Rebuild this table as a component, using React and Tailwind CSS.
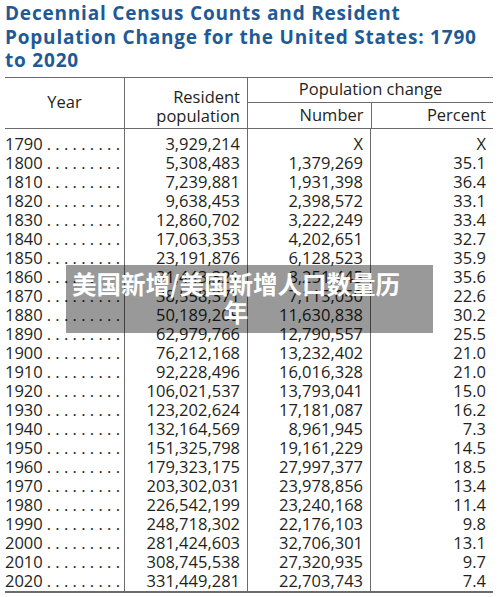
const rows = [
  ["1790", "3,929,214", "X", "X"],
  ["1800", "5,308,483", "1,379,269", "35.1"],
  ["1810", "7,239,881", "1,931,398", "36.4"],
  ["1820", "9,638,453", "2,398,572", "33.1"],
  ["1830", "12,860,702", "3,222,249", "33.4"],
  ["1840", "17,063,353", "4,202,651", "32.7"],
  ["1850", "23,191,876", "6,128,523", "35.9"],
  ["1860", "31,443,321", "8,251,445", "35.6"],
  ["1870", "38,558,371", "7,115,050", "22.6"],
  ["1880", "50,189,209", "11,630,838", "30.2"],
  ["1890", "62,979,766", "12,790,557", "25.5"],
  ["1900", "76,212,168", "13,232,402", "21.0"],
  ["1910", "92,228,496", "16,016,328", "21.0"],
  ["1920", "106,021,537", "13,793,041", "15.0"],
  ["1930", "123,202,624", "17,181,087", "16.2"],
  ["1940", "132,164,569", "8,961,945", "7.3"],
  ["1950", "151,325,798", "19,161,229", "14.5"],
  ["1960", "179,323,175", "27,997,377", "18.5"],
  ["1970", "203,302,031", "23,978,856", "13.4"],
  ["1980", "226,542,199", "23,240,168", "11.4"],
  ["1990", "248,718,302", "22,176,103", "9.8"],
  ["2000", "281,424,603", "32,706,301", "13.1"],
  ["2010", "308,745,538", "27,320,935", "9.7"],
  ["2020", "331,449,281", "22,703,743", "7.4"],
]

export default function App() {
  return (
    <div className="relative w-[500px] h-[597px] bg-white overflow-hidden font-['Open_Sans',sans-serif] text-[#231f20]">
      <h1 className="pl-[5px] pt-[2px] text-[19px] leading-[23.5px] font-bold text-[#1f5a96] tracking-[0.8px]">
        Decennial Census Counts and Resident
        <br />
        Population Change for the United States: 1790
        <br />
        to 2020
      </h1>

      <div className="ml-[5px] mt-[4px] w-[488px] border-t border-[#6b6b6b] text-[16.5px]">
        {/* header */}
        <div className="flex h-[51px] border-b border-[#6b6b6b]">
          <div className="w-[119px] flex items-center justify-center">Year</div>
          <div className="w-[123px] border-l border-[#6b6b6b] flex flex-col justify-end items-end pr-[7px] pb-[3px] leading-[19px]">
            <span>Resident</span>
            <span>population</span>
          </div>
          <div className="w-[246px] border-l border-[#6b6b6b] flex flex-col">
            <div className="h-[25px] border-b border-[#6b6b6b] flex items-center justify-center">
              Population change
            </div>
            <div className="flex flex-1">
              <div className="w-[123px] flex items-center justify-end pr-[7px]">Number</div>
              <div className="w-[123px] border-l border-[#6b6b6b] flex items-center justify-end pr-[7px]">
                Percent
              </div>
            </div>
          </div>
        </div>

        {/* body */}
        <div className="flex border-b-2 border-[#6b6b6b] leading-[19px]">
          <div className="w-[119px] pt-[5px] pb-[1px]">
            {rows.map((r) => (
              <div key={r[0]} className="h-[19px] flex justify-between pr-[4px]">
                <span>{r[0]}</span>
                <span>. . . . . . . . .</span>
              </div>
            ))}
          </div>
          <div className="w-[123px] border-l border-[#6b6b6b] pt-[5px] pb-[1px]">
            {rows.map((r) => (
              <div key={r[0]} className="h-[19px] text-right pr-[7px]">{r[1]}</div>
            ))}
          </div>
          <div className="w-[123px] border-l border-[#6b6b6b] pt-[5px] pb-[1px]">
            {rows.map((r) => (
              <div key={r[0]} className="h-[19px] text-right pr-[7px]">{r[2]}</div>
            ))}
          </div>
          <div className="w-[123px] border-l border-[#6b6b6b] pt-[5px] pb-[1px]">
            {rows.map((r) => (
              <div key={r[0]} className="h-[19px] text-right pr-[7px]">{r[3]}</div>
            ))}
          </div>
        </div>
      </div>

      {/* watermark caption */}
      <div className="absolute left-[66px] top-[265px] w-[367px] h-[68px] bg-black/40 pt-[5px] pl-[5px] pr-[32px] text-center text-white font-bold text-[24.5px] leading-[28px] font-['Noto_Sans_CJK_SC',sans-serif]">
        美国新增/美国新增人口数量历年
      </div>
    </div>
  )
}
